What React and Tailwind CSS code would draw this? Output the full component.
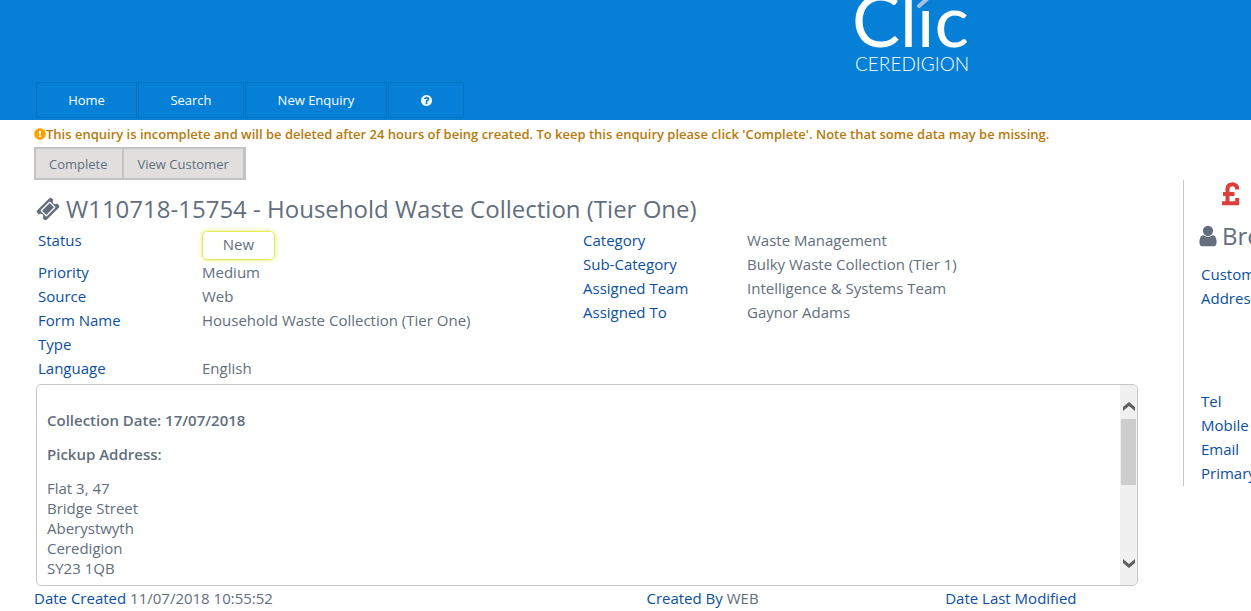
import React from "react";
import { FaExclamationCircle } from "react-icons/fa";

function Icon({ d, className }) {
  return (
    <svg viewBox="0 0 1792 1792" fill="currentColor" aria-hidden="true" className={className}>
      <path d={d} />
    </svg>
  );
}

const USER =
  "M1536 1399q0 109-62.5 187t-150.5 78h-854q-88 0-150.5-78t-62.5-187q0-85 8.5-160.5t31.5-152 58.5-131 94-89 134.5-34.5q131 128 313 128t313-128q76 0 134.5 34.5t94 89 58.5 131 31.5 152 8.5 160.5zm-256-887q0 159-112.5 271.5t-271.5 112.5-271.5-112.5-112.5-271.5 112.5-271.5 271.5-112.5 271.5 112.5 112.5 271.5z";
const TICKET =
  "M1024 452l316 316-572 572-316-316zm-211 979l618-618q19-19 19-45t-19-45l-362-362q-18-18-45-18t-45 18l-618 618q-19 19-19 45t19 45l362 362q18 18 45 18t45-18zm889-637l-907 908q-37 37-90.5 37t-90.5-37l-126-126q56-56 56-136t-56-136-136-56-136 56l-125-126q-37-37-37-90.5t37-90.5l907-906q37-37 90.5-37t90.5 37l125 125q-56 56-56 136t56 136 136 56 136-56l126 125q37 37 37 90.5t-37 90.5z";
const HELP =
  "M1024 1376v-192q0-14-9-23t-23-9h-192q-14 0-23 9t-9 23v192q0 14 9 23t23 9h192q14 0 23-9t9-23zm256-672q0-88-55.5-163t-138.5-116-170-41q-243 0-371 213-15 24 8 42l132 100q7 6 19 6 16 0 25-12 53-68 86-92 34-24 86-24 48 0 85.5 26t37.5 59q0 38-20 61t-68 45q-63 28-115.5 86.5t-52.5 125.5v36q0 14 9 23t23 9h192q14 0 23-9t9-23q0-19 21.5-49.5t54.5-49.5q32-18 49-28.5t46-35 44.5-48 28-60.5 12.5-81zm384 192q0 209-103 385.5t-279.5 279.5-385.5 103-385.5-103-279.5-279.5-103-385.5 103-385.5 279.5-279.5 385.5-103 385.5 103 279.5 279.5 103 385.5z";

function Logo() {
  return (
    <svg
      viewBox="0 0 130 80"
      fill="#fff"
      className="h-20 w-[130px] shrink-0 font-['Lato',sans-serif]"
      role="img"
      aria-label="Clic Ceredigion"
    >
      <text x="1" y="47" fontSize="72">Clıc</text>
      <path d="M68 6L76 -1" stroke="#a9c1e3" strokeWidth="4" strokeLinecap="round" />
      <text x="4" y="71" fontSize="19" className="font-light">CEREDIGION</text>
    </svg>
  );
}

function NavLink({ className, children, ...rest }) {
  return (
    <a
      href="#"
      className={`flex h-9 items-center justify-center border border-[#0572bd] text-[13px] text-white ${className}`}
      {...rest}
    >
      {children}
    </a>
  );
}

function Field({ label, children }) {
  return (
    <div className="grid grid-cols-[164px_1fr]">
      <dt className="text-[#0b509e]">{label}</dt>
      <dd>{children}</dd>
    </div>
  );
}

function Chevron({ down }) {
  return (
    <svg viewBox="0 0 12 9" className="h-[9px] w-3" aria-hidden="true">
      <path d={down ? "M0 0L6 5L12 0V4L6 9L0 4Z" : "M0 9L6 4L12 9V5L6 0L0 5Z"} fill="#606060" />
    </svg>
  );
}

export default function App() {
  return (
    <div className="overflow-hidden bg-white font-['Open_Sans',sans-serif] text-[15px] leading-6 text-[#626e7d]">
      <header className="flex h-[120px] items-start justify-between bg-[#067fd6] pl-9">
        <nav className="flex gap-px self-end pb-[2px]">
          <NavLink className="w-[101px]">Home</NavLink>
          <NavLink className="w-[106px]">Search</NavLink>
          <NavLink className="w-[142px]">New Enquiry</NavLink>
          <NavLink className="w-[76px]" aria-label="Help">
            <Icon d={HELP} className="size-[13px]" />
          </NavLink>
        </nav>
        <div className="mr-[270px]">
          <Logo />
        </div>
      </header>

      <main className="pl-[34px]">
        <p className="flex items-center pt-[2px] text-[13px] font-semibold text-[#b87a0a]">
          <FaExclamationCircle className="size-3 shrink-0 text-[#ffa200]" aria-hidden="true" />
          This enquiry is incomplete and will be deleted after 24 hours of being created. To keep this enquiry please
          click 'Complete'. Note that some data may be missing.
        </p>
        <div className="flex">
          <div className="min-w-0 flex-1">
            <div className="mt-px inline-flex h-[33px] border-2 border-[#c3c3c3] bg-[#e0dfde] text-[13px]">
              <button type="button" className="border-r border-[#c3c3c3] pr-[14px] pl-[13px]">Complete</button>
              <button type="button" className="border-x border-[#c3c3c3] px-[14px]">View Customer</button>
            </div>
            <h1 className="mt-[10px] flex h-[38px] items-center gap-[6px] pl-[2px] text-[24px]">
              <Icon d={TICKET} className="size-6" />
              W110718-15754 - Household Waste Collection (Tier One)
            </h1>
            <div className="grid grid-cols-[545fr_555fr] pl-1">
              <dl>
                <Field label="Status">
                  <span className="mt-[3px] flex h-[29px] w-[73px] items-center justify-center rounded-[5px] border border-[#e2ec5c] pb-[3px] shadow-[0_0_4px_#e2ec5c]">
                    New
                  </span>
                </Field>
                <Field label="Priority">Medium</Field>
                <Field label="Source">Web</Field>
                <Field label="Form Name">Household Waste Collection (Tier One)</Field>
                <Field label="Type" />
                <Field label="Language">English</Field>
              </dl>
              <dl>
                <Field label="Category">Waste Management</Field>
                <Field label="Sub-Category">Bulky Waste Collection (Tier 1)</Field>
                <Field label="Assigned Team">Intelligence &amp; Systems Team</Field>
                <Field label="Assigned To">Gaynor Adams</Field>
              </dl>
            </div>
            <section className="mt-1 ml-[2px] flex h-[202px] overflow-hidden rounded-[5px] border border-[#c6c6c6] leading-5">
              <div className="flex-1 space-y-[14px] px-[10px] pt-[25px]">
                <p className="font-semibold">Collection Date: 17/07/2018</p>
                <p className="font-semibold">Pickup Address:</p>
                <address className="not-italic">
                  Flat 3, 47
                  <br />
                  Bridge Street
                  <br />
                  Aberystwyth
                  <br />
                  Ceredigion
                  <br />
                  SY23 1QB
                </address>
              </div>
              <div className="flex w-[17px] flex-col items-center bg-[#f0f0f0] pt-[17px] pb-[17px]">
                <Chevron />
                <div className="mt-2 h-[66px] w-[15px] bg-[#cdcdcd]" />
                <div className="mt-auto flex">
                  <Chevron down />
                </div>
              </div>
            </section>
            <footer className="grid grid-cols-[613fr_299fr_193fr]">
              <p><span className="text-[#0b509e]">Date Created</span> 11/07/2018 10:55:52</p>
              <p><span className="text-[#0b509e]">Created By</span> WEB</p>
              <p className="text-[#0b509e]">Date Last Modified</p>
            </footer>
          </div>
          <aside className="mt-[34px] ml-[45px] h-[306px] w-[68px] shrink-0 overflow-hidden border-l border-[#c6c6c6] whitespace-nowrap">
            <svg viewBox="0 0 18 24" className="mt-[2px] ml-[38px] h-6 w-[18px]" fill="none" stroke="#d9403c" role="img" aria-label="Payment">
              <path d="M15 7.5V5C12.5 1 5.5 1.5 5.5 7V21M1 12H12.5M0 21.2H15.2V16" strokeWidth="4" />
            </svg>
            <h2 className="mt-[14px] flex h-8 items-center gap-[2px] pl-3 text-[24px]">
              <Icon d={USER} className="size-6 shrink-0" />
              Bro
            </h2>
            <dl className="mt-[10px] pl-[17px] text-[#0b509e]">
              <dt>Customer</dt>
              <dt>Address</dt>
              <dt className="mt-[79px]">Tel</dt>
              <dt>Mobile</dt>
              <dt>Email</dt>
              <dt>Primary</dt>
            </dl>
          </aside>
        </div>
      </main>
    </div>
  );
}
